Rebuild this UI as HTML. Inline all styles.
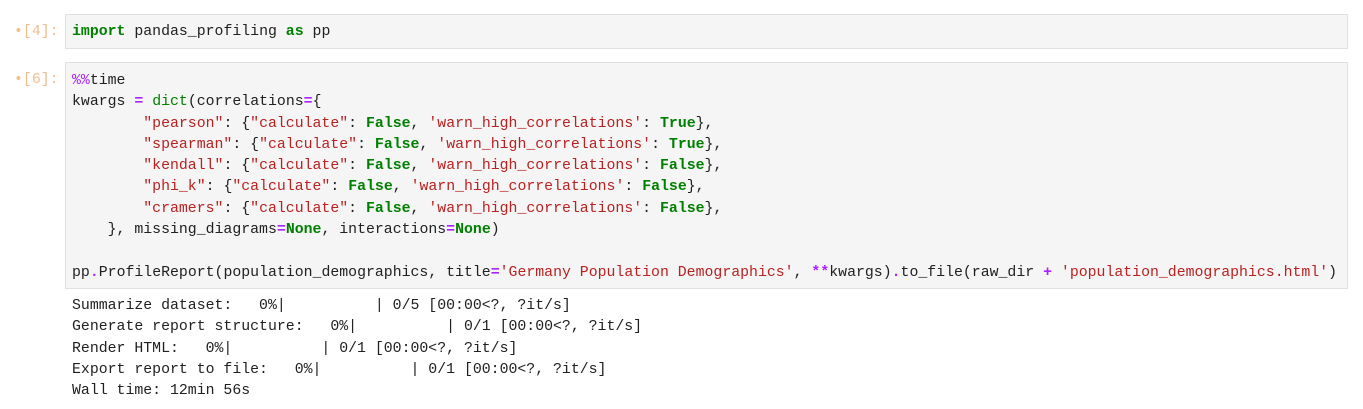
<!DOCTYPE html>
<html><head><style>
body{margin:0;background:#fff;width:1363px;height:409px;overflow:hidden;font-family:"Liberation Mono",monospace;font-size:14.85px;color:#212121}
.cell{position:absolute;left:65px;width:1283px;background:#f5f5f5;border:1px solid #e0e0e0;box-sizing:border-box}
pre{margin:0;font:inherit;line-height:21.3px;white-space:pre}
.p{position:absolute;left:14px;color:#f3bd8c;font:inherit}
.k{color:#008000;font-weight:bold}.o{color:#aa22ff;font-weight:bold}.s{color:#ba2121}.b{color:#008000}.m{color:#aa22ff}
.out{position:absolute;left:72px;top:296px}
</style></head><body>
<div class="p" style="top:24px">•[4]:</div>
<div class="cell" style="top:14px;height:35px"><pre style="position:absolute;left:6px;top:7px"><span class="k">import</span> pandas_profiling <span class="k">as</span> pp</pre></div>
<div class="p" style="top:72px">•[6]:</div>
<div class="cell" style="top:62px;height:227px"><pre style="position:absolute;left:6px;top:8px"><span class="m">%%</span>time
kwargs <span class="o">=</span> <span class="b">dict</span>(correlations<span class="o">=</span>{
        <span class="s">"pearson"</span>: {<span class="s">"calculate"</span>: <span class="k">False</span>, <span class="s">'warn_high_correlations'</span>: <span class="k">True</span>},
        <span class="s">"spearman"</span>: {<span class="s">"calculate"</span>: <span class="k">False</span>, <span class="s">'warn_high_correlations'</span>: <span class="k">True</span>},
        <span class="s">"kendall"</span>: {<span class="s">"calculate"</span>: <span class="k">False</span>, <span class="s">'warn_high_correlations'</span>: <span class="k">False</span>},
        <span class="s">"phi_k"</span>: {<span class="s">"calculate"</span>: <span class="k">False</span>, <span class="s">'warn_high_correlations'</span>: <span class="k">False</span>},
        <span class="s">"cramers"</span>: {<span class="s">"calculate"</span>: <span class="k">False</span>, <span class="s">'warn_high_correlations'</span>: <span class="k">False</span>},
    }, missing_diagrams<span class="o">=</span><span class="k">None</span>, interactions<span class="o">=</span><span class="k">None</span>)

pp<span class="o">.</span>ProfileReport(population_demographics, title<span class="o">=</span><span class="s">'Germany Population Demographics'</span>, <span class="o">**</span>kwargs)<span class="o">.</span>to_file(raw_dir <span class="o">+</span> <span class="s">'population_demographics.html'</span>)</pre></div>
<pre class="out">Summarize dataset:   0%|          | 0/5 [00:00&lt;?, ?it/s]
Generate report structure:   0%|          | 0/1 [00:00&lt;?, ?it/s]
Render HTML:   0%|          | 0/1 [00:00&lt;?, ?it/s]
Export report to file:   0%|          | 0/1 [00:00&lt;?, ?it/s]
Wall time: 12min 56s</pre>
</body></html>
